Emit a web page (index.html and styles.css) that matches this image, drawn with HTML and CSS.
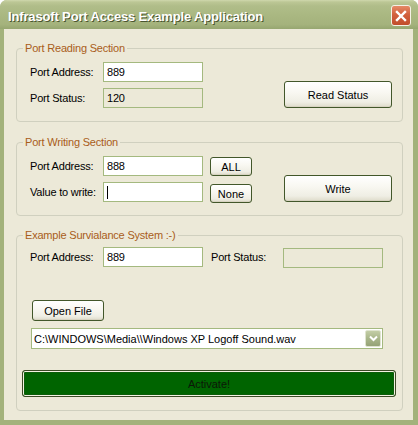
FILE: index.html
```html
<!DOCTYPE html>
<html>
<head>
<meta charset="utf-8">
<link rel="stylesheet" href="styles.css">
</head>
<body>
<div class="window">
  <div class="titlebar">
    <span class="title">Infrasoft Port Access Example Application</span>
    <button class="close" aria-label="Close">
      <svg width="12" height="12" viewBox="0 0 12 12"><path d="M2 2 L10 10 M10 2 L2 10" stroke="#fff" stroke-width="2.4" stroke-linecap="square" fill="none"/></svg>
    </button>
  </div>
  <div class="client">
    <fieldset class="group g1">
      <legend>Port Reading Section</legend>
      <div class="grid">
        <span class="label r1">Port Address:</span>
        <div class="textbox r1 c2">889</div>
        <span class="label r2">Port Status:</span>
        <div class="textbox disabled r2 c2">120</div>
        <button class="btn big">Read Status</button>
      </div>
    </fieldset>

    <fieldset class="group g2">
      <legend>Port Writing Section</legend>
      <div class="grid">
        <span class="label r1">Port Address:</span>
        <div class="textbox r1 c2">888</div>
        <button class="btn small r1 c3 all">ALL</button>
        <span class="label r2">Value to write:</span>
        <div class="textbox r2 c2"><span class="caret"></span></div>
        <button class="btn small r2 c3 none">None</button>
        <button class="btn big">Write</button>
      </div>
    </fieldset>

    <fieldset class="group g3">
      <legend>Example Survialance System :-)</legend>
      <div class="row3">
        <span class="label">Port Address:</span>
        <div class="textbox">889</div>
        <span></span>
        <span class="label">Port Status:</span>
        <div class="textbox disabled status3"></div>
      </div>
      <button class="btn openfile">Open File</button>
      <div class="combo">
        <span class="combo-text">C:\WINDOWS\Media\\Windows XP Logoff Sound.wav</span>
        <span class="combo-btn">
          <svg width="9" height="7" viewBox="0 0 9 7"><path d="M1 1.5 L4.5 5 L8 1.5" stroke="#fff" stroke-width="2" fill="none"/></svg>
        </span>
      </div>
      <button class="activate">Activate!</button>
    </fieldset>
  </div>
</div>
</body>
</html>
```

FILE: styles.css
```css
* { box-sizing: border-box; }

body {
  margin: 0;
  background: #ffffff;
  font-family: "Liberation Sans", Arial, sans-serif;
  font-size: 11px;
  letter-spacing: -0.2px;
  color: #000;
}

.window {
  width: 418px;
  height: 425px;
  display: flex;
  flex-direction: column;
  background: #a3b27b;
  border-radius: 7px 7px 0 0;
}

.titlebar {
  height: 29px;
  flex: none;
  display: flex;
  align-items: flex-start;
  border-radius: 7px 7px 0 0;
  background: linear-gradient(to bottom, #cfd8ad 0, #bcc795 2px, #b0bd89 6px, #aab882 50%, #a4b27c 85%, #96a670 100%);
}

.title {
  margin: 9px 0 0 8px;
  font: bold 13px/16px "Liberation Sans", Arial, sans-serif;
  letter-spacing: -0.15px;
  color: #fff;
  text-shadow: 1px 1px 0 #4a5530;
}

.close {
  margin: 5px 7px 0 auto;
  width: 20px;
  height: 21px;
  padding: 0;
  border: 1px solid #f4f1e6;
  border-radius: 3px;
  background: linear-gradient(to bottom, #e58a66, #d2603d 45%, #c14d2b);
  display: flex;
  align-items: center;
  justify-content: center;
}

.client {
  flex: 1;
  margin: 0 5px 5px 4px;
  background: #ece9d8;
  padding: 13px 10px 0 12px;
  display: flex;
  flex-direction: column;
}

.group {
  margin: 0;
  min-width: 0;
  padding: 7px 10px 13px 13px;
  border: 1px solid #d0d0bf;
  border-radius: 4px;
}

.group legend {
  margin-left: -7px;
  padding: 0 2px;
  line-height: 13px;
  color: #a95d1a;
}

.g2 { margin-top: 14px; }
.g3 { margin-top: 13px; padding-top: 5px; display: flex; flex-direction: column; align-items: flex-start; }

.grid {
  display: grid;
  grid-template-columns: 73px 100px 81px 108px;
  grid-template-rows: 20px 20px;
  row-gap: 6px;
}

.r1 { grid-row: 1; }
.r2 { grid-row: 2; }
.c2 { grid-column: 2; }
.c3 { grid-column: 3; }

.label {
  align-self: center;
  white-space: nowrap;
}

.textbox {
  height: 20px;
  border: 1px solid #a4b97f;
  background: #fff;
  padding: 0 3px;
  display: flex;
  align-items: center;
  white-space: nowrap;
}

.textbox.disabled { background: #ece9d8; }

.caret {
  width: 1px;
  height: 13px;
  background: #000;
}

.btn {
  font: inherit;
  color: #000;
  padding: 0;
  border: 1px solid #42572a;
  border-radius: 3px;
  background: linear-gradient(to bottom, #ffffff 0, #f9f8f2 40%, #efeee4 80%, #dedbca 100%);
  box-shadow: inset 0 -1px 0 #d7d3c1;
}

.big {
  grid-column: 4;
  grid-row: 1 / span 2;
  align-self: end;
  height: 27px;
}

.small {
  width: 42px;
  height: 19px;
  margin-left: 7px;
  justify-self: start;
  align-self: start;
}

.all { margin-top: 1px; }
.none { margin-top: 2px; }

.row3 {
  display: grid;
  grid-template-columns: 73px 100px 8px 72px 100px;
  grid-template-rows: 20px;
}

.status3 { margin-top: 1px; }

.openfile {
  margin: 33px 0 0 2px;
  width: 72px;
  height: 21px;
}

.combo {
  margin: 7px 0 0 1px;
  width: 352px;
  height: 21px;
  border: 1px solid #a4b97f;
  background: #fff;
  display: flex;
  align-items: center;
  padding: 1px;
}

.combo-text {
  flex: 1;
  white-space: nowrap;
  overflow: hidden;
  padding-left: 1px;
  letter-spacing: 0;
}

.combo-btn {
  width: 16px;
  height: 17px;
  border: 1px solid #dfe4cf;
  border-radius: 2px;
  background: linear-gradient(to bottom, #c3cda6, #a9b68a 50%, #95a377);
  display: flex;
  align-items: center;
  justify-content: center;
}

.activate {
  margin: 21px 0 0 -8px;
  width: 374px;
  height: 27px;
  padding: 0;
  font: inherit;
  color: #0c1708;
  border: 1px solid #3c4a26;
  border-radius: 3px;
  background: #006400;
  box-shadow: inset 0 0 0 1px #f3f3e2, inset 0 0 0 2px #0b5d09;
}
```
